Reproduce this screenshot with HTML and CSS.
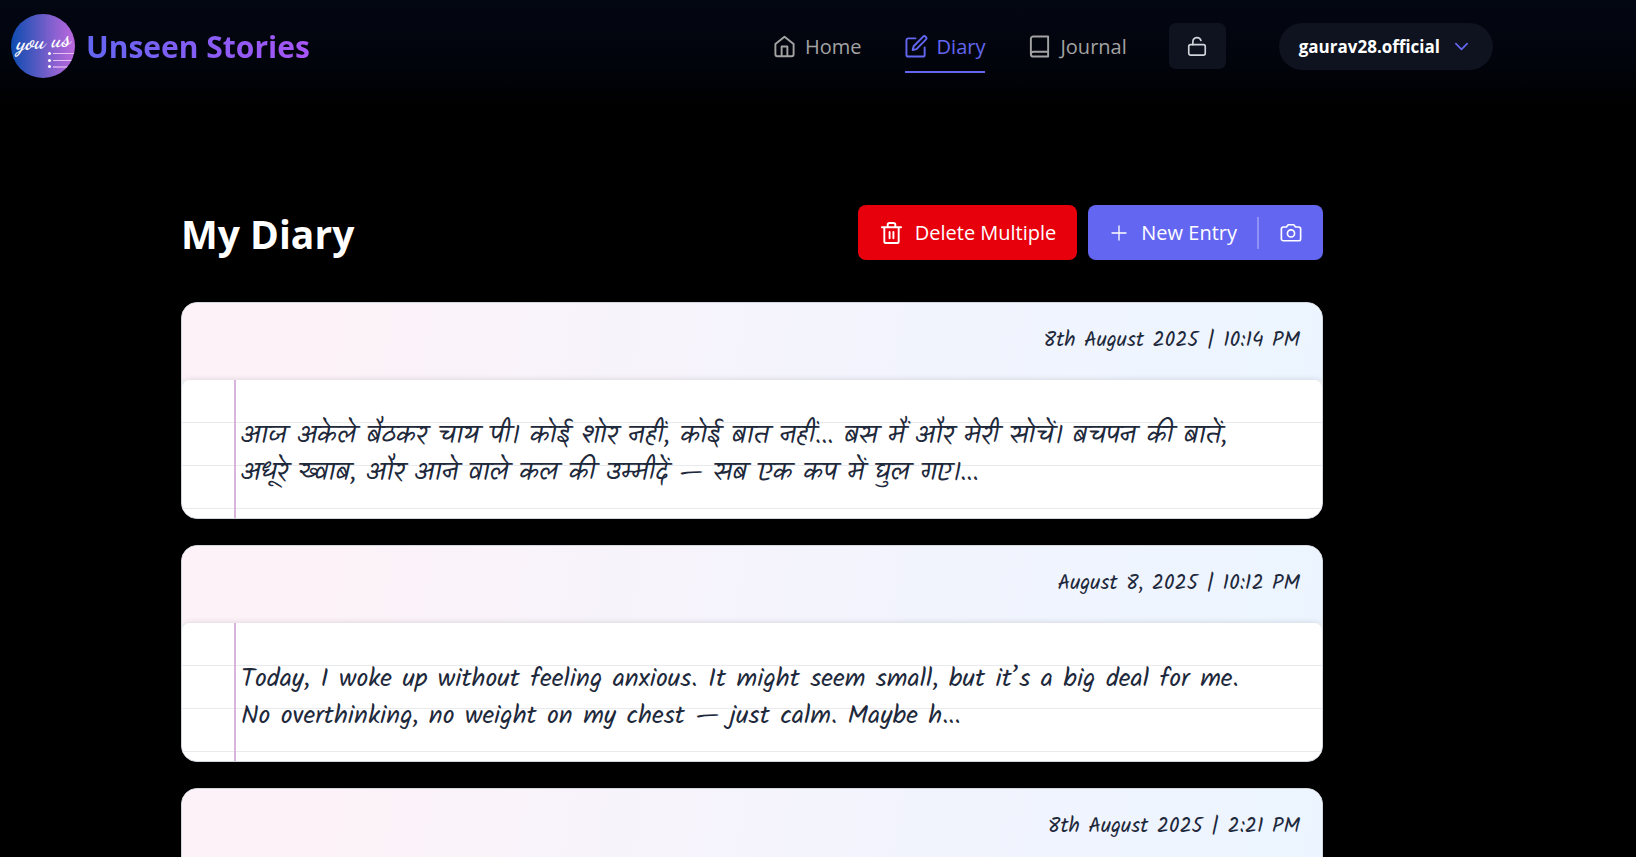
FILE: index.html
```html
<!DOCTYPE html>
<html lang="en">
<head>
<meta charset="utf-8">
<meta name="viewport" content="width=device-width, initial-scale=1">
<title>Unseen Stories</title>
<link rel="stylesheet" href="styles.css">
</head>
<body>
<header class="navbar">
  <a class="brand" href="#">
    <svg class="brand-logo" viewBox="0 0 64 64" aria-hidden="true">
      <defs>
        <linearGradient id="logoFill" x1="0" y1="0" x2="1" y2="0">
          <stop offset="0" stop-color="#0d4bb0"/>
          <stop offset="0.35" stop-color="#4c58c0"/>
          <stop offset="0.65" stop-color="#8560cf"/>
          <stop offset="1" stop-color="#bd68de"/>
        </linearGradient>
        <clipPath id="logoClip"><circle cx="32" cy="32" r="32"/></clipPath>
      </defs>
      <g clip-path="url(#logoClip)">
        <rect width="64" height="64" fill="url(#logoFill)"/>
        <text class="logo-text" x="5" y="36" transform="rotate(-5 5 36)">you us</text>
        <path d="M42 39.500H64" stroke="#e3c3f3" stroke-width="1.200"/>
        <path d="M42 46.500H64" stroke="#e3c3f3" stroke-width="1.200"/>
        <path d="M42 53H64" stroke="#c99ae8" stroke-width="2"/>
        <g fill="#fff"><circle cx="38.500" cy="39.500" r="1.500"/><circle cx="38.500" cy="46.500" r="1.500"/><circle cx="38.500" cy="52.500" r="1.500"/></g>
      </g>
    </svg>
    <span class="brand-name">Unseen Stories</span>
  </a>
  <nav class="nav-links">
    <a class="nav-link" href="#">
      <svg class="icon icon-nav" viewBox="0 0 24 24"><path d="M2.500 9.500 12 1.800l9.500 7.700v10.700a2 2 0 0 1-2 2h-15a2 2 0 0 1-2-2z"/><path d="M9 22v-10h6v10"/></svg>
      Home
    </a>
    <a class="nav-link nav-link-active" href="#" aria-current="page">
      <svg class="icon icon-nav" viewBox="0 0 24 24"><path d="M11 3.500H3.500a2 2 0 0 0-2 2v15a2 2 0 0 0 2 2h15a2 2 0 0 0 2-2V13"/><path d="M18.700 1.900a2.100 2.100 0 0 1 3 3L12 14.700l-4 1 1-4z"/></svg>
      Diary
    </a>
    <a class="nav-link" href="#">
      <svg class="icon icon-nav" viewBox="0 0 24 24"><path d="M3 20A2.500 2.500 0 0 1 5.500 17.500H21"/><path d="M5.500 1.500H21v21H5.500A2.500 2.500 0 0 1 3 20V4a2.500 2.500 0 0 1 2.500-2.500z"/></svg>
      Journal
    </a>
  </nav>
  <button class="lock-button" type="button" aria-label="Unlock diary">
    <svg class="icon icon-button" viewBox="0 0 24 24"><rect x="3" y="10.500" width="18" height="11.500" rx="2"/><path d="M7.500 10.500V7a4.500 4.500 0 0 1 8.800-1"/></svg>
  </button>
  <button class="profile-button" type="button">
    gaurav28.official
    <svg class="icon chevron" viewBox="0 0 16 16"><path d="m2 5 6 6 6-6"/></svg>
  </button>
</header>

<main class="page">
  <div class="page-head">
    <h1 class="page-title">My Diary</h1>
    <div class="actions">
      <button class="action action-delete" type="button">
        <svg class="icon icon-trash" viewBox="0 0 24 24"><path d="M2 6h20M4.500 6v14.500a2 2 0 0 0 2 2h11a2 2 0 0 0 2-2V6M8 6V3.500a2 2 0 0 1 2-2h4a2 2 0 0 1 2 2V6M10 11v6.500M14 11v6.500"/></svg>
        Delete Multiple
      </button>
      <div class="action-group">
        <button class="action action-new" type="button">
          <svg class="icon icon-plus" viewBox="0 0 16 16"><path d="M8 1v14M1 8h14"/></svg>
          New Entry
        </button>
        <button class="action action-camera" type="button" aria-label="New entry from photo">
          <svg class="icon icon-button" viewBox="0 0 24 24"><path d="M22.500 18.500a2 2 0 0 1-2 2h-17a2 2 0 0 1-2-2v-11a2 2 0 0 1 2-2H7L9 3h6l2 2.500h3.500a2 2 0 0 1 2 2z"/><circle cx="12" cy="12.500" r="3.900"/></svg>
        </button>
      </div>
    </div>
  </div>

  <article class="entry">
    <header class="entry-head"><time>8th August 2025 | 10:14 PM</time></header>
    <div class="entry-body">
      <p class="entry-text" lang="hi">आज अकेले बैठकर चाय पी। कोई शोर नहीं, कोई बात नहीं... बस मैं और मेरी सोचें। बचपन की बातें,<br>अधूरे ख्वाब, और आने वाले कल की उम्मीदें — सब एक कप में घुल गए।...</p>
    </div>
  </article>
  <article class="entry">
    <header class="entry-head"><time>August 8, 2025 | 10:12 PM</time></header>
    <div class="entry-body">
      <p class="entry-text">Today, I woke up without feeling anxious. It might seem small, but it’s a big deal for me.<br>No overthinking, no weight on my chest — just calm. Maybe h...</p>
    </div>
  </article>
  <article class="entry">
    <header class="entry-head"><time>8th August 2025 | 2:21 PM</time></header>
    <div class="entry-body"></div>
  </article>
</main>
</body>
</html>
```

FILE: styles.css
```css
* { box-sizing: border-box; }

html {
  background: #000;
  scrollbar-width: none;
}

body {
  margin: 0;
  background: #000;
  color: #fff;
  font-family: "Segoe UI", "Open Sans", "Noto Sans", sans-serif;
  font-size: 20px;
  line-height: 28px;
}

button {
  font: inherit;
  color: inherit;
  border: 0;
  cursor: pointer;
}

.icon {
  flex: none;
  fill: none;
  stroke: currentColor;
  stroke-width: 1.8;
  stroke-linecap: round;
  stroke-linejoin: round;
}

.icon-nav { width: 23px; height: 23px; stroke-width: 2; }

.icon-button { width: 22px; height: 22px; }

/* Top bar */
.navbar {
  display: flex;
  align-items: center;
  height: 106px;
  padding: 0 143px 14px 11px;
  background: linear-gradient(#030712, #02040c 60%, #000);
}

.brand {
  display: flex;
  align-items: center;
  gap: 11px;
  margin-right: auto;
  text-decoration: none;
}

.brand-logo { width: 64px; height: 64px; }

.logo-text {
  font: italic 700 24px "Dancing Script", "Great Vibes", Kalam, cursive;
  fill: #fff;
}

.brand-name {
  padding-top: 2px;
  font-size: 30px;
  line-height: 40px;
  font-weight: 700;
  background: linear-gradient(90deg, #6366f1, #a855f7);
  background-clip: text;
  -webkit-background-clip: text;
  color: transparent;
}

.nav-links {
  display: flex;
  gap: 43px;
  margin-right: 42px;
}

.nav-link {
  display: flex;
  align-items: center;
  gap: 9px;
  padding: 8px 0 10px;
  border-bottom: 2px solid transparent;
  margin-top: 5px;
  color: #a3a3a3;
  text-decoration: none;
}

.nav-link-active {
  color: #6366f1;
  border-color: #6366f1;
}

.lock-button {
  display: grid;
  place-items: center;
  width: 57px;
  height: 46px;
  margin-right: 53px;
  border-radius: 7px;
  background: #0e131f;
  color: #d1d5db;
}

.profile-button {
  display: flex;
  align-items: center;
  gap: 14px;
  height: 47px;
  padding: 1px 24px 0 20px;
  border-radius: 24px;
  background: #0e131f;
  font-size: 17px;
  font-weight: 700;
}

.chevron {
  width: 15px;
  height: 15px;
  color: #6366f1;
}

/* Diary list */
.page { margin: 99px 313px 0 181px; }

.page-head {
  display: flex;
  align-items: center;
  justify-content: space-between;
  margin-bottom: 42px;
}

.page-title {
  margin: 2px 0 0;
  font-size: 39px;
  line-height: 48px;
  font-weight: 700;
}

.actions {
  display: flex;
  gap: 11px;
}

.action {
  display: flex;
  align-items: center;
  height: 55px;
  background: transparent;
}

.action-delete {
  gap: 12px;
  padding: 0 21px 0 22px;
  border-radius: 8px;
  background: #e7000b;
}

.icon-trash { width: 23px; height: 24px; stroke-width: 2; }

.action-group {
  display: flex;
  align-items: center;
  border-radius: 8px;
  background: #6366f1;
}

.action-new { gap: 14px; padding: 0 20px 0 23px; }

.icon-plus { width: 16px; height: 16px; stroke-width: 1.3; }

.action-camera {
  height: 32px;
  padding: 0 21px;
  border-left: 2px solid #8f91f6;
}

.entry {
  margin-bottom: 26px;
  border: 1px solid #d1d5dc;
  border-radius: 16px;
  overflow: hidden;
  background: #f6f7f9;
  color: #1e293b;
  font-family: Kalam, "Open Sans", "Noto Sans", cursive;
}

.entry-head {
  display: flex;
  justify-content: flex-end;
  height: 77px;
  padding: 24px 22px 0;
  background: linear-gradient(100deg, #fdf2f8 10%, #f3f4fd 60%, #ecf5ff);
  font-size: 21px;
}

.entry-body {
  min-height: 138px;
  padding: 38px 22px 0 59px;
  border-radius: 8px 8px 0 0;
  box-shadow: 0 0 6px rgba(0, 0, 0, 0.15);
  background:
    linear-gradient(#d8b4dc, #d8b4dc) 52px 0 / 2px 100% no-repeat,
    repeating-linear-gradient(#fff 0 42px, #e9eaed 42px 43px);
}

.entry-text {
  margin: 0;
  font-size: 26px;
  line-height: 37px;
}
```
